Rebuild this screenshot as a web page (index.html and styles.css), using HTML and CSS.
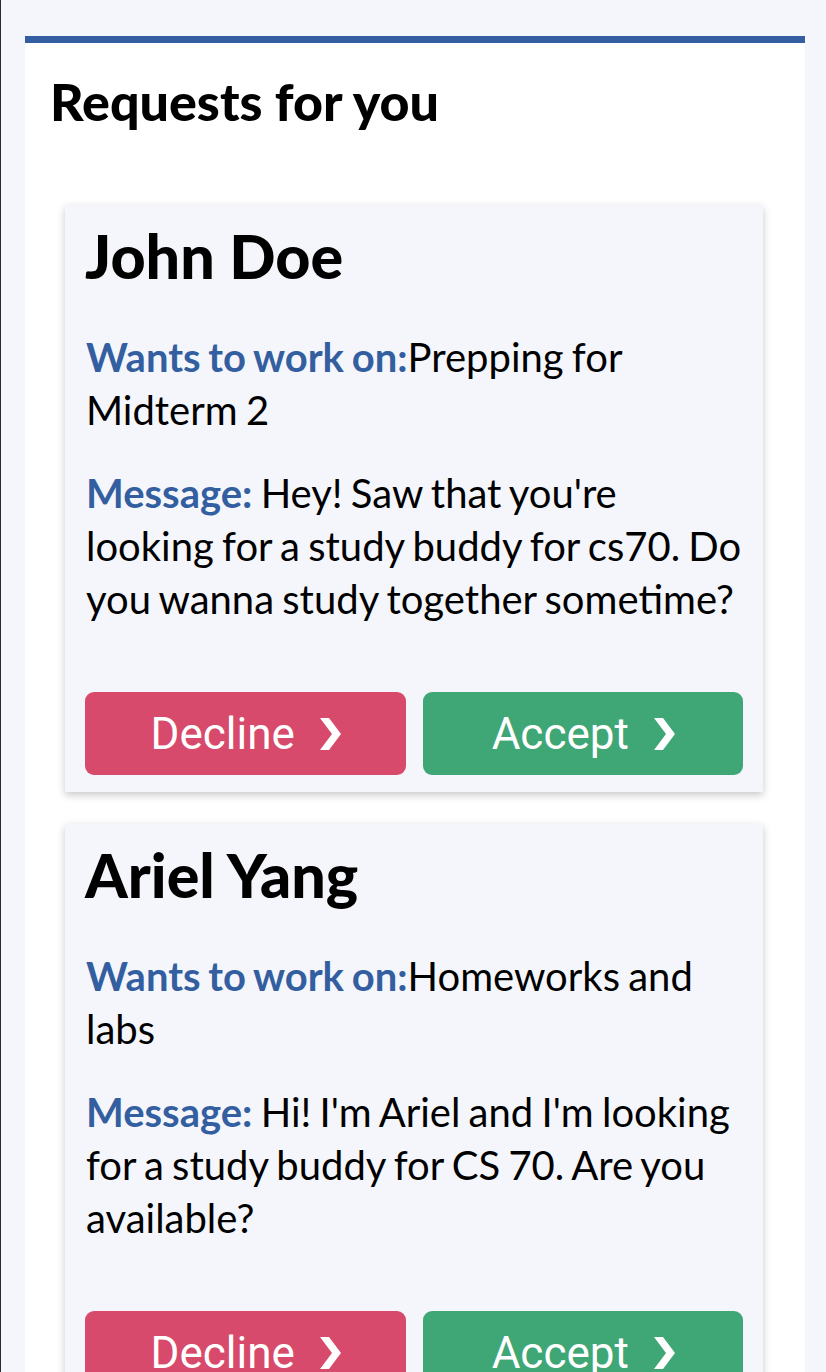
FILE: index.html
```html
<!DOCTYPE html>
<html lang="en">
<head>
<meta charset="utf-8">
<title>Requests for you</title>
<link rel="stylesheet" href="styles.css">
</head>
<body>
<div class="page">
  <section class="panel">
    <h2 class="panel-title">Requests for you</h2>

    <article class="card">
      <h3 class="card-name">John Doe</h3>
      <p class="card-text"><span class="label">Wants to work on:</span>Prepping for Midterm 2</p>
      <p class="card-text"><span class="label">Message:</span> Hey! Saw that you're looking for a study buddy for cs70. Do you wanna study together sometime?</p>
      <div class="actions">
        <button class="btn btn-decline"><span>Decline</span><svg class="chev" viewBox="0 0 22 32" width="22" height="32"><path d="M0 0 H9 L21 16 L9 32 H0 L12 16 Z" fill="#fff"/></svg></button>
        <button class="btn btn-accept"><span>Accept</span><svg class="chev" viewBox="0 0 22 32" width="22" height="32"><path d="M0 0 H9 L21 16 L9 32 H0 L12 16 Z" fill="#fff"/></svg></button>
      </div>
    </article>

    <article class="card">
      <h3 class="card-name">Ariel Yang</h3>
      <p class="card-text"><span class="label">Wants to work on:</span>Homeworks and labs</p>
      <p class="card-text"><span class="label">Message:</span> Hi! I'm Ariel and I'm looking for a study buddy for CS 70. Are you available?</p>
      <div class="actions">
        <button class="btn btn-decline"><span>Decline</span><svg class="chev" viewBox="0 0 22 32" width="22" height="32"><path d="M0 0 H9 L21 16 L9 32 H0 L12 16 Z" fill="#fff"/></svg></button>
        <button class="btn btn-accept"><span>Accept</span><svg class="chev" viewBox="0 0 22 32" width="22" height="32"><path d="M0 0 H9 L21 16 L9 32 H0 L12 16 Z" fill="#fff"/></svg></button>
      </div>
    </article>
  </section>
</div>
</body>
</html>
```

FILE: styles.css
```css
html, body {
  margin: 0;
  padding: 0;
}

body {
  background: #f5f6fb;
  font-family: "Lato", "Noto Sans", sans-serif;
  color: #000;
}

.page {
  border-left: 1px solid #2b2b2b;
  min-height: 1372px;
  padding: 36px 21px 0 24px;
}

.panel {
  background: #fff;
  border-top: 7px solid #335fa0;
  padding: 26px 42px 40px 40px;
}

.panel-title {
  margin: 0 0 72px -15px;
  font-size: 52px;
  font-weight: 900;
  line-height: 64px;
}

.card {
  background: #f5f6fb;
  box-shadow: 0 3px 8px rgba(0, 0, 0, 0.22);
  padding: 16px 20px 17px 20px;
  margin-bottom: 32px;
}

.card-name {
  margin: 0 0 40px 0;
  font-size: 61px;
  font-weight: 900;
  line-height: 70px;
}

.card-text {
  margin: 0 0 30px 1px;
  font-size: 40px;
  line-height: 53px;
  font-weight: 400;
  word-spacing: -2px;
}

.label {
  color: #335fa0;
  font-weight: 700;
}

.actions {
  display: flex;
  gap: 17px;
  margin-top: 66px;
}

.btn {
  flex: 1;
  height: 83px;
  border: none;
  border-radius: 9px;
  color: #fff;
  font-family: "Roboto", "Liberation Sans", sans-serif;
  font-size: 44px;
  display: flex;
  align-items: center;
  justify-content: center;
  gap: 25px;
  padding: 0 0 0 2px;
}

.btn-decline {
  background: #d84a6b;
}

.btn-accept {
  background: #3fa675;
}

.chev {
  display: block;
}
```
